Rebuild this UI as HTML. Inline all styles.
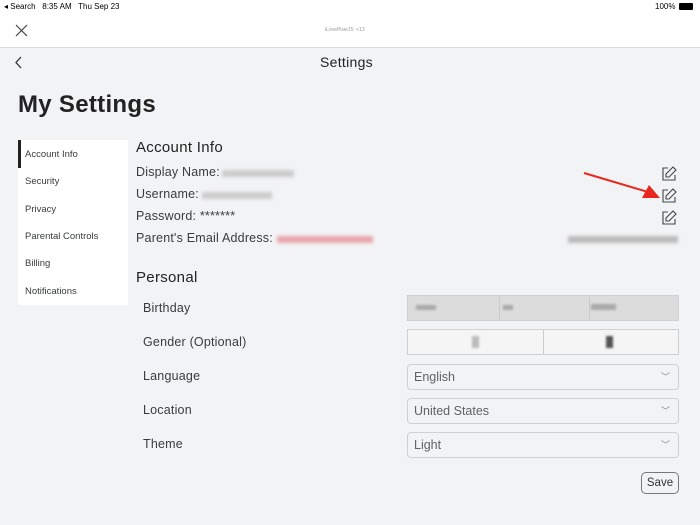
<!DOCTYPE html>
<html><head><style>
*{margin:0;padding:0;box-sizing:border-box}
body{width:700px;height:525px;background:#f2f3f5;font-family:"Liberation Sans",sans-serif;color:#393b3d;position:relative;overflow:hidden}
.a{position:absolute}
.top{left:0;top:0;width:700px;height:48px;background:#fff;border-bottom:1px solid #dcdde0}
.sb div{position:absolute;left:7px;font-size:9.5px;color:#393b3d}
.lbl{font-size:12.5px;color:#393b3d;letter-spacing:.2px}
.box{position:absolute;left:407px;width:272px;height:26px;border:1px solid #cfd0d3;border-radius:4px;background:#f2f3f5;font-size:12.5px;color:#606265;padding:5px 0 0 6px}
.chev{position:absolute;right:8px;top:5px;font-size:9px;color:#888}
.blur{position:absolute;background:#ccc;filter:blur(1.5px);height:7px}
</style></head><body>
<div class="a top"></div>
<div class="a" style="left:4px;top:2px;font-size:8px;color:#000">◂ Search&nbsp;&nbsp; 8:35 AM&nbsp;&nbsp; Thu Sep 23</div>
<div class="a" style="left:655px;top:2px;font-size:8px;color:#000">100%</div>
<div class="a" style="left:679px;top:3px;width:14px;height:7px;background:#000;border-radius:1px"></div>
<svg class="a" style="left:15px;top:24px" width="13" height="13"><path d="M1 1L12 12M12 1L1 12" stroke="#444" stroke-width="1.2"/></svg>
<div class="a" style="left:325px;top:27px;font-size:5px;color:#999">iLovePixie15: <13</div>
<svg class="a" style="left:14px;top:56px" width="9" height="13"><path d="M7 1L2 6.5L7 12" stroke="#333" stroke-width="1.3" fill="none"/></svg>
<div class="a" style="left:320px;top:54px;font-size:14px;color:#222;letter-spacing:.3px">Settings</div>
<div class="a" style="left:18px;top:91px;font-size:24px;font-weight:bold;color:#222;letter-spacing:.3px">My Settings</div>
<div class="a sb" style="left:18px;top:140px;width:110px;height:165px;background:#fff">
<div style="left:0;top:0;width:3px;height:28px;background:#222"></div>
<div style="top:9px">Account Info</div><div style="top:36px">Security</div><div style="top:64px">Privacy</div><div style="top:91px">Parental Controls</div><div style="top:118px">Billing</div><div style="top:146px">Notifications</div>
</div>
<div class="a" style="left:136px;top:139px;font-size:15px;color:#222;letter-spacing:.3px">Account Info</div>
<div class="a lbl" style="left:136px;top:165px">Display Name:</div>
<div class="blur" style="left:222px;top:170px;width:72px"></div>
<div class="a lbl" style="left:136px;top:187px">Username:</div>
<div class="blur" style="left:202px;top:192px;width:70px"></div>
<div class="a lbl" style="left:136px;top:209px">Password: *******</div>
<div class="a lbl" style="left:136px;top:231px">Parent's Email Address:</div>
<div class="blur" style="left:277px;top:236px;width:96px;background:#e8a8ad"></div>
<div class="blur" style="left:568px;top:236px;width:110px;background:#bbb"></div>
<svg class="a" style="left:661px;top:166px" width="16" height="80" fill="none" stroke="#444" stroke-width="1.1"><g><path d="M7 2H2V14H14V9"/><path d="M12 1L15 4L8 11H5V8Z"/></g><g transform="translate(0,22)"><path d="M7 2H2V14H14V9"/><path d="M12 1L15 4L8 11H5V8Z"/></g><g transform="translate(0,44)"><path d="M7 2H2V14H14V9"/><path d="M12 1L15 4L8 11H5V8Z"/></g></svg>
<svg class="a" style="left:580px;top:168px" width="82" height="34"><path d="M4 5L68 24" stroke="#e8281e" stroke-width="2"/><path d="M80 30L62 30L69 17Z" fill="#e8281e"/></svg>
<div class="a" style="left:136px;top:269px;font-size:15px;color:#222;letter-spacing:.3px">Personal</div>
<div class="a lbl" style="left:143px;top:301px">Birthday</div>
<div class="a lbl" style="left:143px;top:335px">Gender (Optional)</div>
<div class="a lbl" style="left:143px;top:369px">Language</div>
<div class="a lbl" style="left:143px;top:403px">Location</div>
<div class="a lbl" style="left:143px;top:437px">Theme</div>
<div class="box" style="top:295px;background:#dcdcdd;border-radius:0"><div class="a" style="left:91px;top:0;width:1px;height:24px;background:#ccc"></div><div class="a" style="left:181px;top:0;width:1px;height:24px;background:#ccc"></div><div class="a" style="left:8px;top:9px;width:20px;height:5px;background:#aaa;filter:blur(1px)"></div><div class="a" style="left:95px;top:9px;width:10px;height:5px;background:#aaa;filter:blur(1px)"></div><div class="a" style="left:183px;top:8px;width:25px;height:6px;background:#aaa;filter:blur(1px)"></div></div>
<div class="box" style="top:329px;background:#f5f5f6;border-radius:0"><div class="a" style="left:135px;top:0;width:1px;height:24px;background:#ccc"></div><div class="a" style="left:64px;top:6px;width:7px;height:12px;background:#bbb;filter:blur(1px)"></div><div class="a" style="left:198px;top:6px;width:7px;height:12px;background:#555;filter:blur(1px)"></div></div>
<div class="box" style="top:364px">English<span class="chev">﹀</span></div>
<div class="box" style="top:398px">United States<span class="chev">﹀</span></div>
<div class="box" style="top:432px">Light<span class="chev">﹀</span></div>
<div class="a" style="left:641px;top:472px;width:38px;height:22px;border:1px solid #777;border-radius:5px;font-size:11.5px;color:#333;text-align:center;padding-top:4px">Save</div>
</body></html>
